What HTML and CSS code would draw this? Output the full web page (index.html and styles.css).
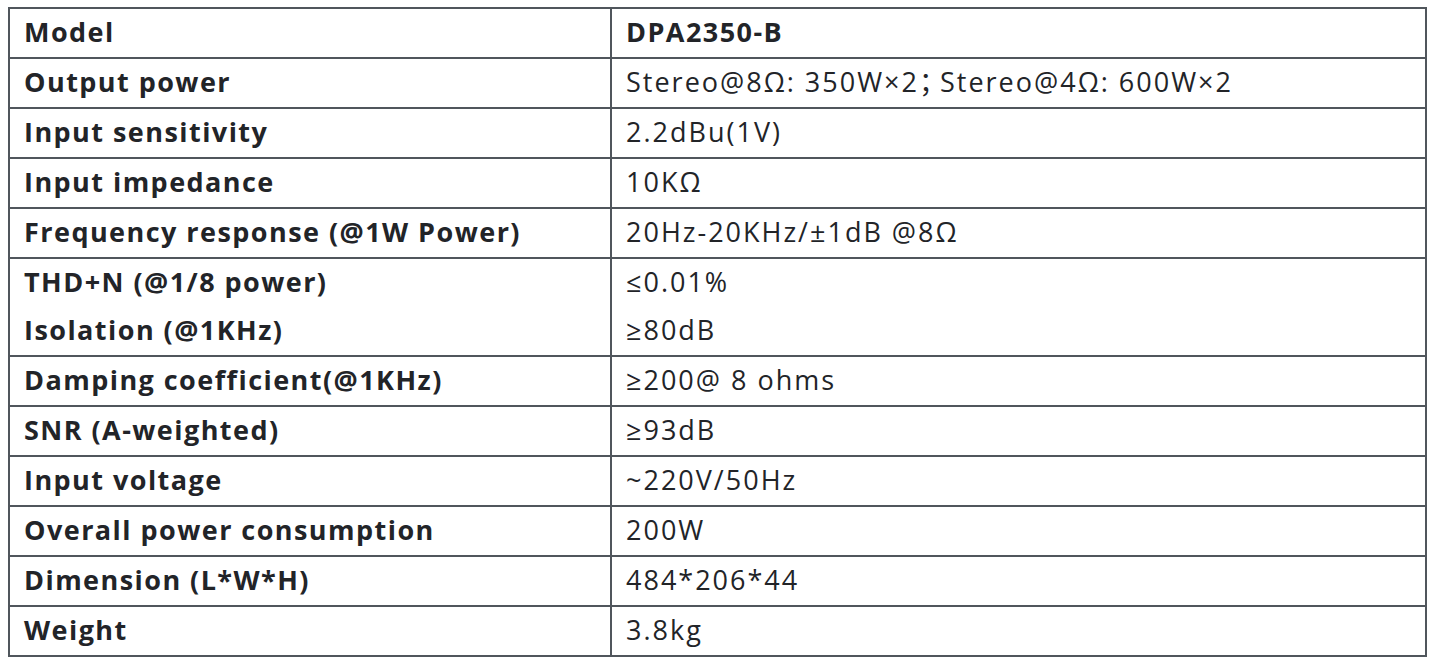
FILE: index.html
```html
<!DOCTYPE html>
<html>
<head>
<meta charset="utf-8">
<link rel="stylesheet" href="styles.css">
</head>
<body>
<table class="spec">
  <colgroup><col class="c1"><col class="c2"></colgroup>
  <tr><td class="k">Model</td><td class="k">DPA2350-B</td></tr>
  <tr><td class="k">Output power</td><td class="v">Stereo@8Ω: 350W×2<span class="semi">；</span>Stereo@4Ω: 600W×2</td></tr>
  <tr><td class="k">Input sensitivity</td><td class="v">2.2dBu(1V)</td></tr>
  <tr><td class="k">Input impedance</td><td class="v">10KΩ</td></tr>
  <tr><td class="k">Frequency response (@1W Power)</td><td class="v">20Hz-20KHz/±1dB @8Ω</td></tr>
  <tr class="nob"><td class="k">THD+N (@1/8 power)</td><td class="v">≤0.01%</td></tr>
  <tr><td class="k">Isolation (@1KHz)</td><td class="v">≥80dB</td></tr>
  <tr><td class="k">Damping coefficient(@1KHz)</td><td class="v">≥200@ 8 ohms</td></tr>
  <tr><td class="k">SNR (A-weighted)</td><td class="v">≥93dB</td></tr>
  <tr><td class="k">Input voltage</td><td class="v">~220V/50Hz</td></tr>
  <tr><td class="k">Overall power consumption</td><td class="v">200W</td></tr>
  <tr><td class="k">Dimension (L*W*H)</td><td class="v">484*206*44</td></tr>
  <tr><td class="k">Weight</td><td class="v">3.8kg</td></tr>
</table>
</body>
</html>
```
FILE: styles.css
```css
html, body {
  margin: 0;
  padding: 0;
  background: #ffffff;
}
body {
  padding: 7px 0 0 8px;
}
.spec {
  border-collapse: collapse;
  width: 1419px;
  table-layout: fixed;
  font-family: "Open Sans", "Noto Sans", sans-serif;
  color: #222428;
}
.c1 { width: 602px; }
.spec td {
  border: 2px solid #50565c;
  height: 45px;
  padding: 0 0 3px 14px;
  font-size: 27px;
  line-height: 30px;
  white-space: nowrap;
  vertical-align: middle;
}
.spec tr.nob td {
  border-bottom: none;
}
.spec tr.nob + tr td {
  border-top: none;
}
.k { font-weight: 700; letter-spacing: 1.45px; }
.v { font-weight: 400; letter-spacing: 2px; }
.semi {
  font-family: "Noto Sans CJK SC", sans-serif;
  letter-spacing: -6px;
}
```
